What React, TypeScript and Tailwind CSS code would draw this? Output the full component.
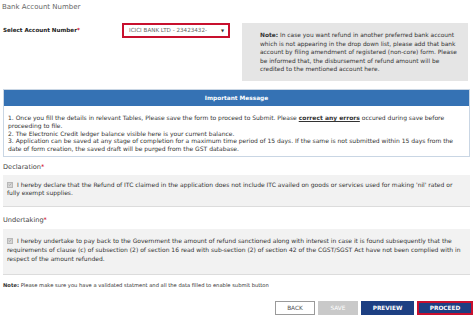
import React from "react";

const body = { fontFamily: '"DejaVu Sans", Verdana, sans-serif' };

function Check() {
  return (
    <span className="inline-flex items-center justify-center w-[6px] h-[6px] mr-[4px] align-[-0.5px] bg-[#d6d6d6] border border-[#b8b8b8]">
      <svg viewBox="0 0 6 6" className="w-[5px] h-[5px]">
        <path d="M1 3 L2.4 4.4 L5 1.4" stroke="#9a9a9a" strokeWidth="1" fill="none" />
      </svg>
    </span>
  );
}

export default function App() {
  return (
    <div className="w-[474px] h-[316px] bg-white overflow-hidden text-[#333]" style={body}>
      {/* title */}
      <div className="pl-[2px] pt-[2px] text-[7px] leading-[10px] text-[#666]">Bank Account Number</div>

      {/* account row */}
      <div className="flex mt-[11px] ml-[3px]">
        <div className="w-[119px] text-[5.6px] font-bold leading-[8px] pt-[3px] text-[#222]">
          Select Account Number<span className="text-[#d0021b]">*</span>
        </div>
        <div className="w-[108px] h-[15px] border-2 border-[#c8102e] flex items-center justify-between pl-[5px] pr-[4px] text-[5.6px] text-[#666]">
          <span>ICICI BANK LTD - 23423432-</span>
          <span className="text-[4px] text-[#333]">▼</span>
        </div>
        <div className="ml-[12px] w-[226px] h-[58px] bg-[#e5e5e5] pl-[18px] pr-[5px] pt-[8px] text-[5.9px] leading-[8.5px] text-[#333]">
          <span className="font-bold">Note:</span> In case you want refund in another preferred bank account which is not appearing in the drop down list, please add that bank account by filing amendment of registered (non-core) form. Please be informed that, the disbursement of refund amount will be credited to the mentioned account here.
        </div>
      </div>

      {/* important message */}
      <div className="ml-[3px] w-[467px] mt-[8px] border border-[#c9d6e4]">
        <div className="h-[16px] bg-[#3572b4] flex items-center justify-center text-white text-[5.8px] font-semibold">
          Important Message
        </div>
        <div className="px-[4px] pt-[8px] pb-[3px] text-[6px] leading-[7.8px] text-[#333]">
          <div>
            1. Once you fill the details in relevant Tables, Please save the form to proceed to Submit. Please{" "}
            <span className="font-bold underline">correct any errors</span> occured during save before proceeding to file.
          </div>
          <div>2. The Electronic Credit ledger balance visible here is your current balance.</div>
          <div>
            3. Application can be saved at any stage of completion for a maximum time period of 15 days. If the same is not submitted within 15 days from the date of form creation, the saved draft will be purged from the GST database.
          </div>
        </div>
      </div>

      {/* declaration */}
      <div className="ml-[3px] mt-[6px] text-[6.6px] leading-[9px] text-[#444]">
        Declaration<span className="text-[#d0021b]">*</span>
      </div>
      <div className="ml-[3px] w-[467px] mt-[3px] bg-[#f2f2f2] border-b border-[#dcdcdc] pl-[4px] pr-[4px] pt-[6px] pb-[9px] text-[6px] leading-[8px] text-[#333]">
        <Check />I hereby declare that the Refund of ITC claimed in the application does not include ITC availed on goods or services used for making 'nil' rated or fully exempt supplies.
      </div>

      {/* undertaking */}
      <div className="ml-[3px] mt-[9px] text-[6.6px] leading-[9px] text-[#444]">
        Undertaking<span className="text-[#d0021b]">*</span>
      </div>
      <div className="ml-[3px] w-[467px] mt-[4px] bg-[#f2f2f2] border-b border-[#dcdcdc] pl-[4px] pr-[4px] pt-[7px] pb-[11px] text-[6px] leading-[9px] text-[#333]">
        <Check />I hereby undertake to pay back to the Government the amount of refund sanctioned along with interest in case it is found subsequently that the requirements of clause (c) of subsection (2) of section 16 read with sub-section (2) of section 42 of the CGST/SGST Act have not been complied with in respect of the amount refunded.
      </div>

      {/* note */}
      <div className="ml-[3px] mt-[6px] text-[5.2px] leading-[8px] text-[#333]">
        <span className="font-bold">Note:</span> Please make sure you have a validated statment and all the data filled to enable submit button
      </div>

      {/* buttons */}
      <div className="flex justify-end gap-[3px] pr-[1px] mt-[12px] text-[5.8px]">
        <div className="w-[40px] h-[14px] border border-[#9a9a9a] bg-white text-[#555] flex items-center justify-center">BACK</div>
        <div className="w-[40px] h-[14px] bg-[#c9c9c9] text-white flex items-center justify-center">SAVE</div>
        <div className="w-[53px] h-[14px] bg-[#1d3f82] text-white font-semibold flex items-center justify-center">PREVIEW</div>
        <div className="w-[56px] h-[14px] bg-[#1d3f82] border-2 border-[#c8102e] text-white font-semibold flex items-center justify-center">PROCEED</div>
      </div>
    </div>
  );
}
